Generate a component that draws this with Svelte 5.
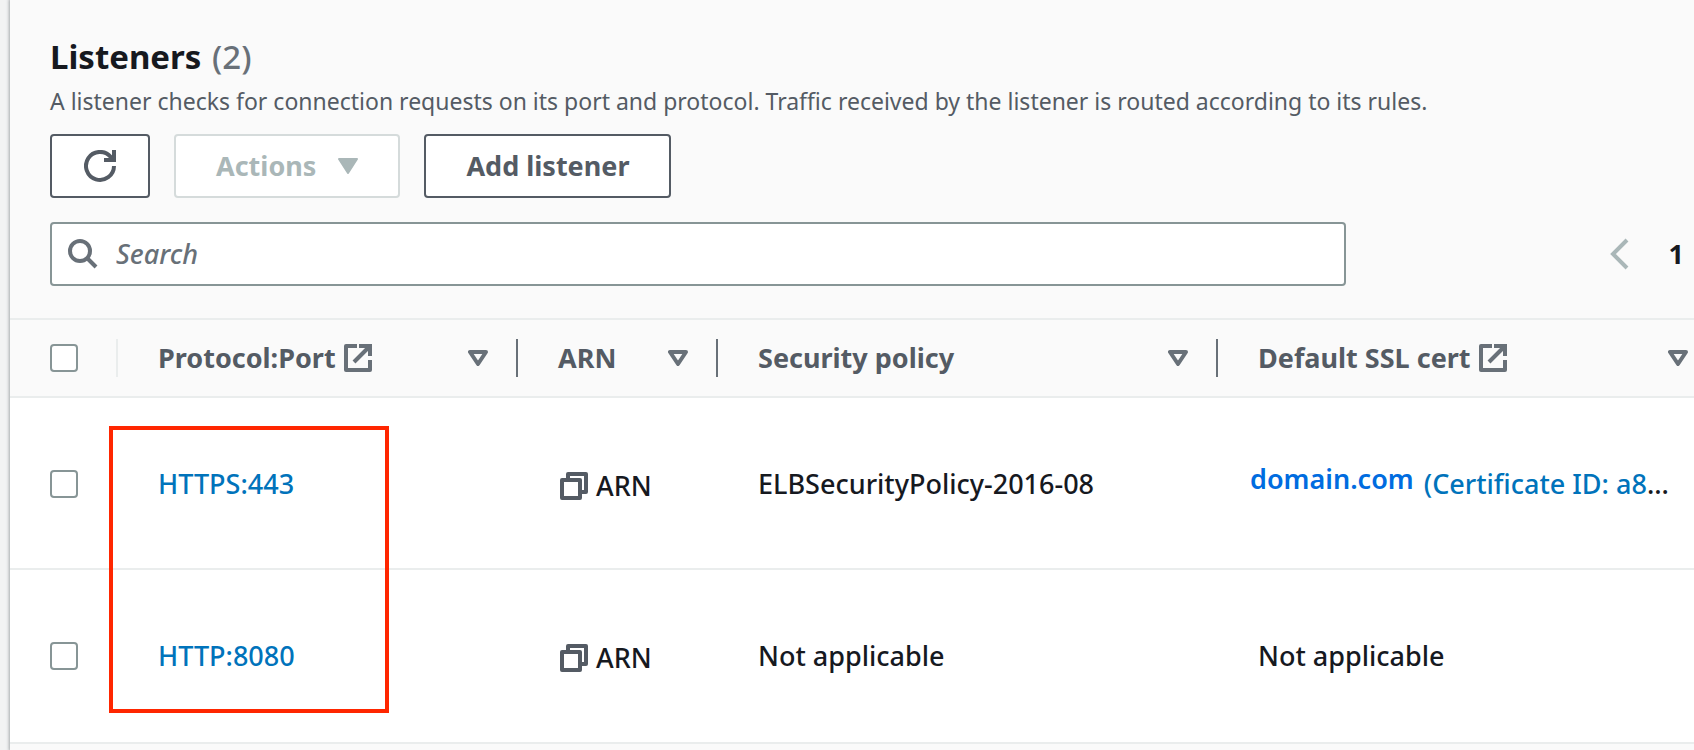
<script lang="ts">
  const columns: { label: string; external: boolean; size: string }[] = [
    { label: "Protocol:Port", external: true, size: "port" },
    { label: "ARN", external: false, size: "arn" },
    { label: "Security policy", external: false, size: "policy" },
    { label: "Default SSL cert", external: true, size: "cert" },
  ];

  const listeners = [
    {
      port: "HTTPS:443",
      policy: "ELBSecurityPolicy-2016-08",
      cert: { domain: "domain.com", id: "(Certificate ID: a8" },
    },
    { port: "HTTP:8080", policy: "Not applicable", cert: null },
  ];

  let search = $state("");
</script>

<section class="panel">
  <header class="panel-header">
    <h2>Listeners <span class="count">(2)</span></h2>
    <p class="description">
      A listener checks for connection requests on its port and protocol. Traffic received by the
      listener is routed according to its rules.
    </p>

    <div class="actions">
      <button class="btn btn-icon" type="button" aria-label="Refresh">
        <svg width="32" height="32" viewBox="0 0 16 16" fill="none" stroke="currentColor" stroke-width="2">
          <path d="M15 8a7 7 0 1 1-1.6-4.5L15 5" />
          <path d="M15 0v5h-5" />
        </svg>
      </button>
      <button class="btn" type="button" disabled>
        Actions
        <svg class="caret" width="20" height="16" viewBox="0 0 20 16" fill="currentColor" stroke="currentColor" stroke-width="2" stroke-linejoin="round">
          <path d="M1 1h18l-9 14z" />
        </svg>
      </button>
      <button class="btn" type="button">Add listener</button>
    </div>

    <div class="filter-row">
      <label class="search">
        <svg width="30" height="30" viewBox="0 0 30 30" fill="none" stroke="currentColor" stroke-width="4">
          <circle cx="12" cy="12" r="10" />
          <path d="M19 19l9 9" />
        </svg>
        <input type="text" placeholder="Search" aria-label="Search listeners" bind:value={search} />
      </label>
      <nav class="pages" aria-label="Pages">
        <button class="page-prev" type="button" aria-label="Previous page" disabled>
          <svg width="20" height="32" viewBox="0 0 20 32" fill="none" stroke="currentColor" stroke-width="4">
            <path d="M18 2L4 16l14 14" />
          </svg>
        </button>
        <button class="page" type="button">1</button>
      </nav>
    </div>
  </header>

  <table>
    <thead>
      <tr>
        <th class="col-check">
          <div class="head head-check"><input type="checkbox" aria-label="Select all" /></div>
        </th>
        {#each columns as col (col.label)}
          <th class="col-{col.size}">
            <div class="head">
              <span>{col.label}</span>
              {#if col.external}
                <svg class="external" width="28" height="28" viewBox="0 0 28 28" fill="none" stroke="currentColor" stroke-width="4">
                  <path d="M13 2H2v24h24V16" stroke-linejoin="round" />
                  <path d="M15 2h11v10" />
                  <path d="M25 3L10 18" />
                </svg>
              {/if}
              <svg class="sort" width="20" height="16" viewBox="0 0 20 16" fill="none" stroke="currentColor" stroke-width="4" stroke-linejoin="round">
                <path d="M2 2h16l-8 12z" />
              </svg>
            </div>
          </th>
        {/each}
      </tr>
    </thead>
    <tbody>
      {#each listeners as row (row.port)}
        <tr>
          <td><input type="checkbox" aria-label="Select {row.port}" /></td>
          <td><a href="#listener">{row.port}</a></td>
          <td>
            <button class="copy" type="button">
              <svg width="28" height="28" viewBox="0 0 28 28" fill="none" stroke="currentColor" stroke-width="4" stroke-linejoin="round">
                <path d="M2 8h18v18H2z" />
                <path d="M8 8V2h18v18h-6" />
              </svg>
              ARN
            </button>
          </td>
          <td>{row.policy}</td>
          <td>
            {#if row.cert}
              <div class="cert">
                <a class="domain" href="#cert">{row.cert.domain}</a>
                <span><a href="#cert">{row.cert.id}</a>…</span>
              </div>
            {:else}
              Not applicable
            {/if}
          </td>
        </tr>
      {/each}
    </tbody>
  </table>

  <div class="highlight"></div>
</section>

<style>
  :global(body) {
    background: #f2f3f3;
    overflow: hidden;
  }
  .panel {
    position: relative;
    margin-left: 10px;
    min-height: 100vh;
    background: #fafafa;
    box-shadow: 0 0 3px 1px #a4a8ab;
    color: #16191f;
    font-family: "Noto Sans", "Open Sans", sans-serif;
    font-size: 27px;
    font-weight: 500;
    line-height: 36px;
    overflow-x: clip;
    overflow-clip-margin: 6px;
  }
  .panel-header {
    padding: 33px 0 32px 40px;
  }
  h2 {
    margin: 0;
    font-size: 33px;
    line-height: 48px;
    font-weight: 700;
  }
  .count {
    margin-left: 2px;
    color: #687078;
    font-weight: 500;
  }
  .description {
    margin: 4px 0 17px;
    color: #545b64;
    font-size: 23px;
    font-weight: 400;
    line-height: 32px;
    white-space: nowrap;
  }
  button {
    font: inherit;
    color: inherit;
  }
  .actions {
    display: flex;
    gap: 24px;
  }
  .btn {
    display: flex;
    align-items: center;
    justify-content: center;
    gap: 22px;
    height: 64px;
    padding: 0 40px;
    border: 2px solid #545b64;
    border-radius: 4px;
    background: #fff;
    color: #545b64;
    font-weight: 700;
  }
  .btn:disabled {
    border-color: #d5dbdb;
    color: #aab7b8;
  }
  .btn-icon {
    padding: 0 32px;
  }
  .filter-row {
    display: flex;
    align-items: center;
    justify-content: space-between;
    margin-top: 24px;
    padding-right: 10px;
  }
  .search {
    display: flex;
    align-items: center;
    gap: 18px;
    flex: 0 0 79.3%;
    box-sizing: border-box;
    height: 64px;
    padding: 0 16px;
    border: 2px solid #879596;
    border-radius: 4px;
    background: #fff;
    color: #687078;
  }
  .search input {
    flex: 1;
    min-width: 0;
    padding: 0;
    border: 0;
    outline: 0;
    background: none;
    color: #16191f;
    font: inherit;
  }
  .search input::placeholder {
    color: #687078;
    font-style: italic;
    opacity: 1;
  }
  .pages {
    display: flex;
    align-items: center;
    gap: 40px;
  }
  .pages button {
    display: flex;
    padding: 0;
    border: 0;
    background: none;
  }
  .pages .page-prev {
    color: #aab7b8;
  }
  .pages .page {
    font-weight: 700;
  }
  table {
    width: 1708px;
    table-layout: fixed;
    border-collapse: separate;
    border-spacing: 0;
  }
  .col-check {
    width: 108px;
  }
  .col-port {
    width: 400px;
  }
  .col-arn {
    width: 200px;
  }
  .col-policy,
  .col-cert {
    width: 500px;
  }
  th {
    padding: 19px 0;
    border-top: 2px solid #eaeded;
    border-bottom: 2px solid #eaeded;
    color: #545b64;
    font-weight: 700;
    text-align: left;
    white-space: nowrap;
  }
  .head {
    display: flex;
    align-items: center;
    height: 38px;
    padding: 0 28px 0 40px;
    border-right: 2px solid #687078;
  }
  .head-check {
    border-right-color: #eaeded;
  }
  .external {
    margin-left: 8px;
    color: #687078;
  }
  .sort {
    margin-left: auto;
    color: #687078;
  }
  input[type="checkbox"] {
    appearance: none;
    display: block;
    flex: none;
    width: 28px;
    height: 28px;
    margin: 0;
    border: 2px solid #879596;
    border-radius: 4px;
    background: #fff;
  }
  td {
    height: 168px;
    padding: 2px 0 0 40px;
    border-bottom: 2px solid #eaeded;
    background: #fff;
    white-space: nowrap;
  }
  tr:last-child td {
    padding-bottom: 2px;
  }
  a {
    color: #0073bb;
    text-decoration: none;
  }
  .copy {
    display: flex;
    align-items: center;
    gap: 8px;
    padding: 4px 0 0 2px;
    border: 0;
    background: none;
  }
  .copy svg {
    color: #545b64;
  }
  .cert {
    display: flex;
    gap: 10px;
    margin-left: -8px;
  }
  .domain {
    padding-bottom: 10px;
    color: #006ce0;
    font-weight: 600;
  }
  .cert span {
    align-self: center;
  }
  .highlight {
    position: absolute;
    top: 426px;
    left: 99px;
    box-sizing: border-box;
    width: 280px;
    height: 287px;
    border: 4px solid #ff2600;
    pointer-events: none;
  }
</style>
